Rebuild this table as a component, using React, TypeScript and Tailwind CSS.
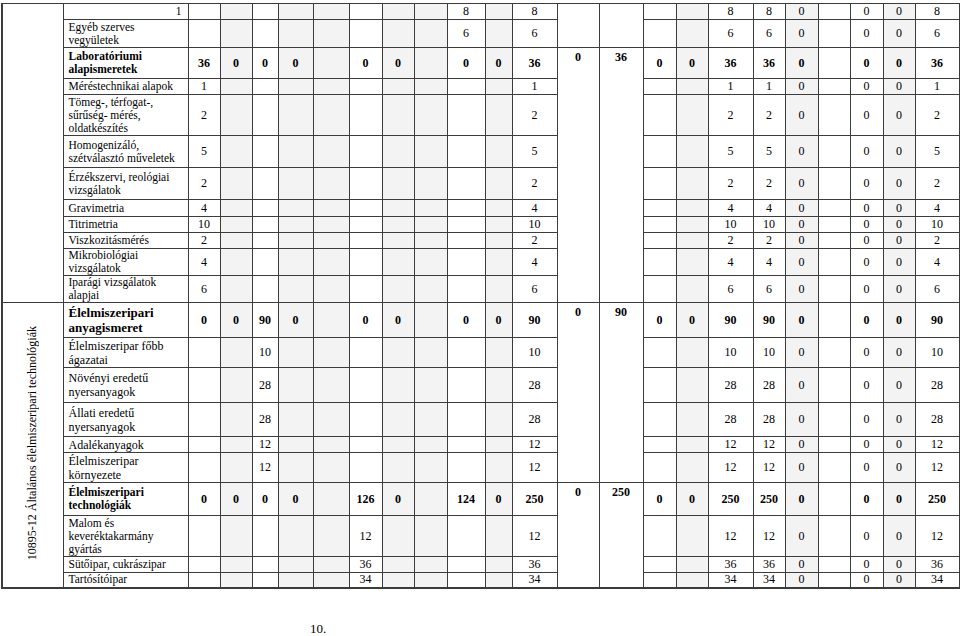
import React from 'react';

type Row = {
  name: React.ReactNode;
  h: number;
  kind?: 'head' | 'bighead' | 'big';
  vals: Record<number, string>;
  right?: boolean;
};

// column widths, c0..c23 (c13/c14 are merged per group)
const widths = [61, 125, 32, 32, 26, 35, 36, 33, 32, 33, 38, 27, 45, 42, 44, 33, 32, 45, 32, 33, 32, 33, 32, 44];
const gray = new Set([3, 5, 6, 8, 9, 11, 16, 19, 22]);

const sub = (col: number, v: string) => ({ [col]: v, 12: v, 17: v, 18: v, 19: '0', 21: '0', 22: '0', 23: v });

const rows: Row[] = [
  { name: '1', right: true, h: 16, vals: { 10: '8', 12: '8', 17: '8', 18: '8', 19: '0', 21: '0', 22: '0', 23: '8' } },
  { name: <>Egyéb szerves<br />vegyületek</>, h: 28, vals: { 10: '6', 12: '6', 17: '6', 18: '6', 19: '0', 21: '0', 22: '0', 23: '6' } },
  {
    name: <>Laboratóriumi<br />alapismeretek</>, h: 31, kind: 'head',
    vals: { 2: '36', 3: '0', 4: '0', 5: '0', 7: '0', 8: '0', 10: '0', 11: '0', 12: '36', 15: '0', 16: '0', 17: '36', 18: '36', 19: '0', 21: '0', 22: '0', 23: '36' },
  },
  { name: 'Méréstechnikai alapok', h: 16, vals: sub(2, '1') },
  { name: <>Tömeg-, térfogat-,<br />sűrűség- mérés,<br />oldatkészítés</>, h: 41, vals: sub(2, '2') },
  { name: <>Homogenizáló,<br />szétválasztó műveletek</>, h: 32, vals: sub(2, '5') },
  { name: <>Érzékszervi, reológiai<br />vizsgálatok</>, h: 32, vals: sub(2, '2') },
  { name: 'Gravimetria', h: 17, vals: sub(2, '4') },
  { name: 'Titrimetria', h: 16, vals: sub(2, '10') },
  { name: 'Viszkozitásmérés', h: 16, vals: sub(2, '2') },
  { name: <>Mikrobiológiai<br />vizsgálatok</>, h: 27, vals: sub(2, '4') },
  { name: <>Iparági vizsgálatok<br />alapjai</>, h: 27, vals: sub(2, '6') },
  {
    name: <>Élelmiszeripari<br />anyagismeret</>, h: 35, kind: 'bighead',
    vals: { 2: '0', 3: '0', 4: '90', 5: '0', 7: '0', 8: '0', 10: '0', 11: '0', 12: '90', 15: '0', 16: '0', 17: '90', 18: '90', 19: '0', 21: '0', 22: '0', 23: '90' },
  },
  { name: <>Élelmiszeripar főbb<br />ágazatai</>, h: 30, kind: 'big', vals: sub(4, '10') },
  { name: <>Növényi eredetű<br />nyersanyagok</>, h: 35, kind: 'big', vals: sub(4, '28') },
  { name: <>Állati eredetű<br />nyersanyagok</>, h: 34, kind: 'big', vals: sub(4, '28') },
  { name: 'Adalékanyagok', h: 16, kind: 'big', vals: sub(4, '12') },
  { name: <>Élelmiszeripar<br />környezete</>, h: 30, kind: 'big', vals: sub(4, '12') },
  {
    name: <>Élelmiszeripari<br />technológiák</>, h: 33, kind: 'head',
    vals: { 2: '0', 3: '0', 4: '0', 5: '0', 7: '126', 8: '0', 10: '124', 11: '0', 12: '250', 15: '0', 16: '0', 17: '250', 18: '250', 19: '0', 21: '0', 22: '0', 23: '250' },
  },
  { name: <>Malom és<br />keveréktakarmány<br />gyártás</>, h: 41, vals: sub(7, '12') },
  { name: 'Sütőipar, cukrászipar', h: 16, vals: sub(7, '36') },
  { name: 'Tartósítóipar', h: 15, vals: sub(7, '34') },
];

// merged c13/c14 blocks: start row -> [span, c13, c14]
const mergedRight: Record<number, [number, string, string]> = {
  0: [2, '', ''],
  2: [10, '0', '36'],
  12: [6, '0', '90'],
  18: [4, '0', '250'],
};

const cellBorder = 'border border-[#3c3c3c]';

const App = () => {
  return (
    <div className="w-[960px] min-h-[636px] bg-white text-black" style={{ fontFamily: '"Liberation Serif", "Times New Roman", serif' }}>
      <table className="table-fixed border-collapse w-[957px] ml-[1px] mt-[3px]">
        <colgroup>
          {widths.map((w, i) => (
            <col key={i} style={{ width: w }} />
          ))}
        </colgroup>
        <tbody>
          {rows.map((r, ri) => {
            const bold = r.kind === 'head' || r.kind === 'bighead';
            const last = ri === rows.length - 1;
            const nameSize =
              r.kind === 'bighead' ? 'text-[13px] leading-[15px] font-bold' :
              r.kind === 'big' ? 'text-[12px] leading-[14px]' :
              r.kind === 'head' ? 'text-[11.5px] leading-[13px] font-bold' :
              'text-[11.5px] leading-[13px]';
            const cells: React.ReactNode[] = [];
            for (let c = 2; c <= 23; c++) {
              if (c === 13 || c === 14) {
                if (c === 13 && mergedRight[ri]) {
                  const [span, a, b] = mergedRight[ri];
                  cells.push(
                    <td key="m13" rowSpan={span} className={`${cellBorder} align-top text-center text-[12px] leading-[13px] font-bold pt-[3px] ${ri === 18 ? 'border-b-2' : ''}`}>{a}</td>,
                    <td key="m14" rowSpan={span} className={`${cellBorder} align-top text-center text-[12px] leading-[13px] font-bold pt-[3px] ${ri === 18 ? 'border-b-2' : ''}`}>{b}</td>,
                  );
                }
                continue;
              }
              cells.push(
                <td
                  key={c}
                  className={`${cellBorder} p-0 text-center text-[12px] leading-[13px] ${bold ? 'font-bold' : ''} ${gray.has(c) ? 'bg-[#f3f3f3]' : ''} ${last ? 'border-b-2' : ''}`}
                >
                  {r.vals[c] ?? ''}
                </td>,
              );
            }
            return (
              <tr key={ri} style={{ height: r.h }}>
                {ri === 0 && <td rowSpan={12} className={`${cellBorder} border-l-2`} />}
                {ri === 12 && (
                  <td rowSpan={10} className={`${cellBorder} border-l-2 border-b-2 p-0 text-center align-middle`}>
                    <div className="inline-block [writing-mode:vertical-rl] rotate-180 whitespace-nowrap text-[12px] leading-[13px] mt-[3px]">
                      10895-12 Általános élelmiszeripari technológiák
                    </div>
                  </td>
                )}
                <td className={`${cellBorder} py-0 pl-[5px] pr-[6px] whitespace-nowrap ${nameSize} ${r.right ? 'text-right' : 'text-left'} ${last ? 'border-b-2' : ''}`}>
                  {r.name}
                </td>
                {cells}
              </tr>
            );
          })}
        </tbody>
      </table>
      <div className="mt-[33px] pl-[310px] text-[13px] leading-[13px]">10.</div>
    </div>
  );
};

export default App;
